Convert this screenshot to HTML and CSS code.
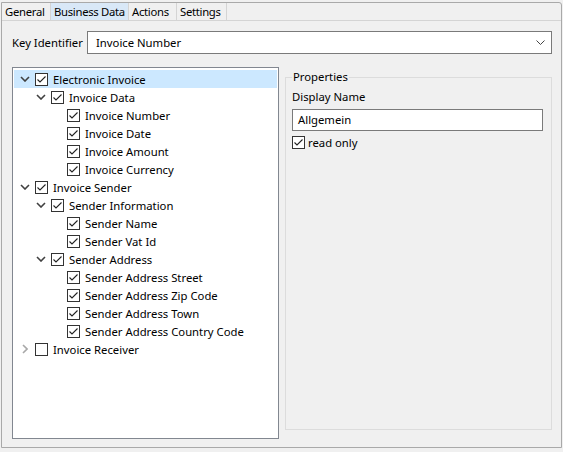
FILE: index.html
```html
<!DOCTYPE html>
<html lang="en">

<head>
    <meta charset="UTF-8">
    <title>Business Data</title>
    <link rel="stylesheet" href="styles.css">
</head>

<body>
    <div class="window">
        <div class="tabs">
            <div class="tab tab-general">General</div>
            <div class="tab tab-business active">Business Data</div>
            <div class="tab tab-actions">Actions</div>
            <div class="tab tab-settings">Settings</div>
        </div>

        <div class="page">
            <div class="key-row">
                <span class="label">Key Identifier</span>
                <div class="combo">
                    <span>Invoice Number</span>
                    <svg class="combo-arrow" width="10" height="6" viewBox="0 0 10 6">
                        <polyline points="0.5,0.5 4.5,4.5 8.5,0.5" fill="none" stroke="#444" stroke-width="1" />
                    </svg>
                </div>
            </div>

            <div class="columns">
                <div class="tree" id="tree"></div>

                <fieldset class="group">
                    <legend>Properties</legend>
                    <div class="field-label">Display Name</div>
                    <div class="textbox">Allgemein</div>
                    <div class="check-row">
                        <span class="check checked"></span>
                        <span>read only</span>
                    </div>
                </fieldset>
            </div>
        </div>
    </div>

    <script>
        // level, expanded (null = leaf), checked, text, selected
        var items = [
            [0, true, true, 'Electronic Invoice', true],
            [1, true, true, 'Invoice Data'],
            [2, null, true, 'Invoice Number'],
            [2, null, true, 'Invoice Date'],
            [2, null, true, 'Invoice Amount'],
            [2, null, true, 'Invoice Currency'],
            [0, true, true, 'Invoice Sender'],
            [1, true, true, 'Sender Information'],
            [2, null, true, 'Sender Name'],
            [2, null, true, 'Sender Vat Id'],
            [1, true, true, 'Sender Address'],
            [2, null, true, 'Sender Address Street'],
            [2, null, true, 'Sender Address Zip Code'],
            [2, null, true, 'Sender Address Town'],
            [2, null, true, 'Sender Address Country Code'],
            [0, false, false, 'Invoice Receiver']
        ];

        var down = '<svg width="10" height="6" viewBox="0 0 10 6"><polyline points="1,1 5,5 9,1" fill="none" stroke="#404040" stroke-width="1.6"/></svg>';
        var right = '<svg width="6" height="10" viewBox="0 0 6 10"><polyline points="1,1 5,5 1,9" fill="none" stroke="#a8a8a8" stroke-width="1.6"/></svg>';

        var tree = document.getElementById('tree');
        items.forEach(function (it) {
            var row = document.createElement('div');
            row.className = 'row' + (it[4] ? ' selected' : '');
            row.style.paddingLeft = (3 + it[0] * 16) + 'px';
            var toggle = it[1] === null ? '' : (it[1] ? down : right);
            row.innerHTML = '<span class="toggle">' + toggle + '</span>' +
                '<span class="check' + (it[2] ? ' checked' : '') + '"></span>' +
                '<span class="text">' + it[3] + '</span>';
            tree.appendChild(row);
        });
    </script>
</body>

</html>
```

FILE: styles.css
```css
body {
    margin: 0;
    padding: 0;
    background-color: #f0f0f0;
    font-family: "Noto Sans", "Open Sans", sans-serif;
    font-size: 11.3px;
    color: #000;
}

.window {
    margin: 2px 1px 0 1px;
    height: 446px;
    border: 1px solid #a9a9a9;
    border-radius: 0 3px 0 0;
    box-sizing: border-box;
    display: flex;
    flex-direction: column;
}

.tabs {
    display: flex;
    height: 18px;
    border-bottom: 1px solid #d4d4d4;
}

.tab {
    padding-left: 3px;
    line-height: 17px;
    letter-spacing: -0.3px;
    border-right: 1px solid #d4d4d4;
    box-sizing: border-box;
    white-space: nowrap;
    overflow: hidden;
}

.tab-general {
    width: 49px;
}

.tab-business {
    width: 78px;
}

.tab-actions {
    width: 48px;
}

.tab-settings {
    width: 50px;
}

.tab.active {
    background-color: #d9e8f7;
}

.page {
    flex: 1;
    padding: 10px 9px 10px 10px;
    display: flex;
    flex-direction: column;
}

.key-row {
    display: flex;
    align-items: center;
    height: 23px;
}

.key-row .label {
    width: 75px;
    white-space: nowrap;
}

.combo {
    flex: 1;
    height: 23px;
    box-sizing: border-box;
    border: 1px solid #7a7a7a;
    background-color: #fff;
    display: flex;
    align-items: center;
    padding: 0 4px 0 8px;
}

.combo span {
    flex: 1;
}

.combo-arrow {
    margin-right: 1px;
}

.columns {
    flex: 1;
    display: flex;
    margin-top: 13px;
    gap: 6px;
}

.tree {
    width: 267px;
    height: 372px;
    box-sizing: border-box;
    border: 1px solid #828790;
    background-color: #fff;
    padding: 2px 1px;
}

.row {
    height: 18px;
    display: flex;
    align-items: center;
}

.row.selected {
    background-color: #cce8ff;
}

.toggle {
    width: 16px;
    display: flex;
    justify-content: center;
    align-items: center;
}

.check {
    width: 13px;
    height: 13px;
    box-sizing: border-box;
    border: 1px solid #333;
    background-color: #fff;
    margin-left: 2px;
    flex-shrink: 0;
}

.check.checked {
    background-image: url("data:image/svg+xml;utf8,<svg xmlns='http://www.w3.org/2000/svg' width='11' height='11' viewBox='0 0 11 11'><polyline points='1.5,5.5 4,8 9.5,2.5' fill='none' stroke='%23222' stroke-width='1.1'/></svg>");
}

.row .text {
    margin-left: 5px;
    white-space: nowrap;
}

.group {
    flex: 1;
    margin: 3px 0 0 0;
    height: 360px;
    box-sizing: border-box;
    border: 1px solid #dcdcdc;
    padding: 0 8px 0 6px;
}

.group legend {
    padding: 0 1px;
    margin-left: 0;
    line-height: 14px;
}

.field-label {
    margin-top: 5px;
    line-height: 16px;
}

.textbox {
    height: 22px;
    box-sizing: border-box;
    border: 1px solid #7a7a7a;
    background-color: #fff;
    padding: 0 5px;
    line-height: 20px;
    margin-top: 4px;
}

.check-row {
    display: flex;
    align-items: center;
    margin-top: 4px;
}

.check-row .check {
    margin-left: 0;
    margin-right: 3px;
}
```
